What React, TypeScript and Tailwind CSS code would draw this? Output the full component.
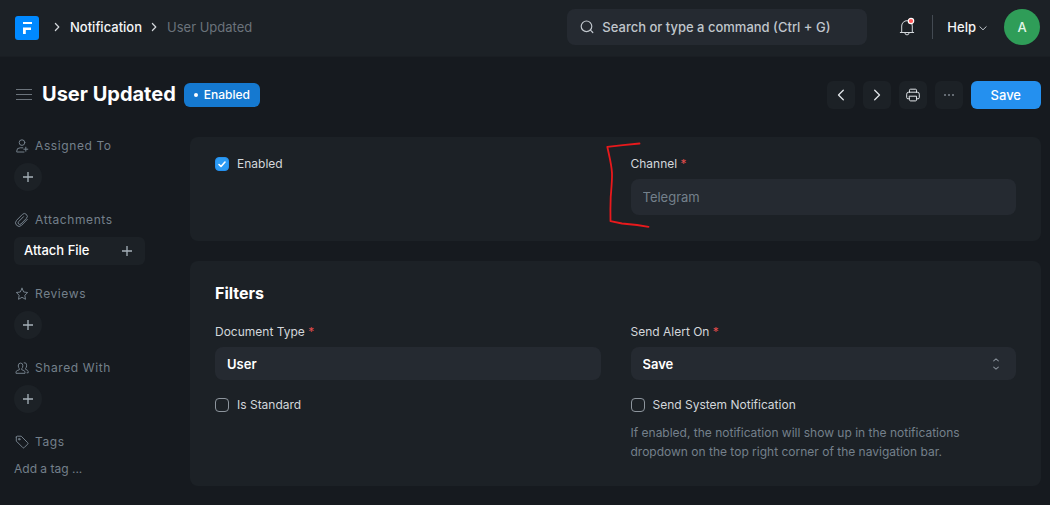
import type { ReactNode, SVGProps } from 'react';

function Icon({ children, className = '', ...rest }: SVGProps<SVGSVGElement>) {
  return (
    <svg
      viewBox="0 0 16 16"
      fill="none"
      stroke="currentColor"
      strokeLinecap="round"
      strokeLinejoin="round"
      aria-hidden="true"
      className={`size-4 shrink-0 ${className}`}
      {...rest}
    >
      {children}
    </svg>
  );
}

const ChevronRight = ({ className = '' }: { className?: string }) => (
  <Icon className={className}>
    <path d="M6.4 4.5 9.8 8l-3.4 3.5" strokeWidth="1.2" />
  </Icon>
);

const UserPlusIcon = () => (
  <Icon>
    <circle cx="8" cy="4.6" r="2.800" />
    <path d="M8.800 9.800H6.200a3.400 3.400 0 0 0-3.500 3.500v.7h7.300M11.800 9.200v4M9.800 11.200h4" />
  </Icon>
);

const ClipIcon = () => (
  <Icon>
    <path d="m13.300 7.400-5.700 5.900a3.500 3.500 0 0 1-5-5l5.800-5.900a2.800 2.800 0 0 1 4 4l-5.500 5.600a1.600 1.600 0 0 1-2.300-2.300l4.900-5" />
  </Icon>
);

const StarIcon = () => (
  <Icon>
    <path d="m8 2.300 1.700 3.700 4 .5-2.900 2.800.7 4L8 11.300l-3.500 2 .7-4-2.900-2.800 4-.5L8 2.300Z" />
  </Icon>
);

const UsersIcon = () => (
  <Icon>
    <path d="M4.400 6V5.300a2.200 2.200 0 0 1 4.400 0V6c0 1.300-.5 2.200-1.100 2.700v1l2.200.9c.7.300 1.100.9 1.100 1.600v1.100H2v-1.100c0-.7.4-1.300 1.100-1.600l2.300-.9v-1C4.800 8.200 4.400 7.300 4.400 6Z" />
    <path d="M10.200 2.700a2.200 2.200 0 0 1 2.400 2.200v.9c0 1.200-.4 2-1 2.500v1l1.700.9c.6.300.9.8.9 1.500v1.100h-1.200" />
  </Icon>
);

const TagIcon = () => (
  <Icon>
    <path d="M2.300 3.100v4l6.500 6.500a1 1 0 0 0 1.400 0l3.500-3.500a1 1 0 0 0 0-1.400L7.200 2.200h-4a.9.900 0 0 0-.9.900Z" />
    <circle cx="5.200" cy="5.200" r=".8" />
  </Icon>
);

const PlusIcon = () => (
  <Icon>
    <path d="M8 3v10M3 8h10" strokeWidth="1.300" strokeLinecap="butt" />
  </Icon>
);

function Section({ icon, title, children }: { icon: ReactNode; title: string; children: ReactNode }) {
  return (
    <section>
      <h2 className="flex h-5 items-center gap-[5px] tracking-wider">
        {icon}
        {title}
      </h2>
      <div className="mt-[7px]">{children}</div>
    </section>
  );
}

function AddButton({ label }: { label: string }) {
  return (
    <button
      type="button"
      aria-label={label}
      className="flex size-7 items-center justify-center rounded-full bg-[#1c2126] text-[#a6b1b9]"
    >
      <PlusIcon />
    </button>
  );
}

function ToolButton({ label, children }: { label: string; children: ReactNode }) {
  return (
    <button
      type="button"
      aria-label={label}
      className="flex size-7 items-center justify-center rounded-md bg-[#1c2126] text-[#e0e4e8]"
    >
      {children}
    </button>
  );
}

function FieldLabel({ htmlFor, children }: { htmlFor: string; children: ReactNode }) {
  return (
    <label htmlFor={htmlFor} className="mb-[5px] block text-xs leading-5 text-[#d3d7db]">
      {children} <span className="text-[#e24c4c]">*</span>
    </label>
  );
}

function Check({ label, checked = false }: { label: string; checked?: boolean }) {
  return (
    <label className="flex h-5 items-center gap-2 text-xs text-[#d3d7db]">
      <span className="grid">
        <input
          type="checkbox"
          defaultChecked={checked}
          className="peer col-start-1 row-start-1 size-3.5 appearance-none rounded border border-[#8d959d] checked:border-[#2490ef] checked:bg-[#2d9bf3]"
        />
        <svg
          viewBox="0 0 14 14"
          fill="none"
          stroke="white"
          strokeWidth="1.600"
          strokeLinecap="round"
          strokeLinejoin="round"
          aria-hidden="true"
          className="pointer-events-none invisible col-start-1 row-start-1 size-3.5 peer-checked:visible"
        >
          <path d="m4 7.500 2 2 4-4.500" />
        </svg>
      </span>
      {label}
    </label>
  );
}

function Navbar() {
  return (
    <header className="flex h-[57px] items-start border-b border-[#1a1e23] bg-[#1c2126] pt-[9px] pr-[10px] pl-[15px] font-medium">
      <nav aria-label="Breadcrumb" className="flex h-9 items-center">
        <a href="#home" aria-label="Home" className="pt-0.5">
          <svg viewBox="0 0 24 24" className="size-6" aria-hidden="true">
            <rect width="24" height="24" rx="3" fill="#0089ff" />
            <path d="M8 6h9v2H8zM8 11.600h8v2.400h-5.200v4H8z" fill="#fff" />
          </svg>
        </a>
        <ChevronRight className="ml-[10px]" />
        <a href="#notification" className="ml-[5px] text-[#f4f5f6]">
          Notification
        </a>
        <ChevronRight className="mx-1" />
        <a href="#user-updated" className="ml-px font-normal text-[#6b737b]">
          User Updated
        </a>
      </nav>
      <div className="ml-auto flex h-9 items-center">
        <label className="flex h-9 w-[300px] items-center rounded-lg bg-[#252a31] px-3 text-[#c0c6cc]">
          <Icon>
            <circle cx="7.500" cy="7.300" r="5.300" strokeWidth="1.200" />
            <path d="m11.500 11.200 2.300 2.300" strokeWidth="1.200" />
          </Icon>
          <input
            type="text"
            aria-label="Search"
            placeholder="Search or type a command (Ctrl + G)"
            className="ml-[7px] min-w-0 flex-1 bg-transparent outline-none placeholder:text-[#c0c6cc]"
          />
        </label>
        <button type="button" aria-label="Notifications" className="ml-[30px] text-[#d3d7db]">
          <svg
            viewBox="0 0 20 20"
            fill="none"
            stroke="currentColor"
            strokeLinecap="round"
            strokeLinejoin="round"
            aria-hidden="true"
            className="size-5"
          >
            <path d="M15.300 15.500V9a5.300 5.300 0 0 0-10.600 0v6.500M3.300 15.500h13.400M7.800 15.700a2.200 2.200 0 0 0 4.400 0" />
            <circle cx="14" cy="4" r="2.700" fill="#ff5858" stroke="#fff" strokeWidth="1.200" />
          </svg>
        </button>
        <div className="ml-[15px] h-6 w-px bg-[#434a52]" />
        <button type="button" className="ml-[14px] flex items-center gap-[3px] text-[#f4f5f6]">
          Help
          <svg
            viewBox="0 0 8 8"
            fill="none"
            stroke="#c0c6cc"
            strokeLinecap="round"
            strokeLinejoin="round"
            aria-hidden="true"
            className="mt-0.5 size-2"
          >
            <path d="M.8 2.700 4 5.800l3.200-3.100" />
          </svg>
        </button>
        <button
          type="button"
          aria-label="Account"
          className="ml-[17px] flex size-9 items-center justify-center rounded-full bg-[#2f9d58] text-[#e4f5e9]"
        >
          A
        </button>
      </div>
    </header>
  );
}

function PageHead() {
  return (
    <div className="flex h-[76px] items-center pr-[9px] pl-4">
      <button type="button" aria-label="Toggle sidebar" className="text-[#6b737b]">
        <Icon>
          <path d="M0 2.500h16M0 7.500h16M0 12.500h16" strokeLinecap="butt" />
        </Icon>
      </button>
      <h1 className="ml-[10px] pb-0.5 text-xl font-bold text-white">User Updated</h1>
      <span className="ml-2 flex h-6 items-center gap-[6px] rounded-md bg-[#1579d0] px-[10px] text-xs font-medium text-white">
        <span className="size-1 rounded-full bg-white" />
        Enabled
      </span>
      <div className="ml-auto flex gap-2">
        <ToolButton label="Previous">
          <Icon>
            <path d="M10.300 3.200 5.500 8l4.800 4.800" strokeWidth="1.300" />
          </Icon>
        </ToolButton>
        <ToolButton label="Next">
          <Icon>
            <path d="M5.700 3.200 10.500 8l-4.800 4.800" strokeWidth="1.300" />
          </Icon>
        </ToolButton>
        <ToolButton label="Print">
          <Icon>
            <path d="M4.500 5.300V3.200a1 1 0 0 1 1-1h5a1 1 0 0 1 1 1v2.100M4.300 11.800H3a1.300 1.300 0 0 1-1.300-1.300V7.200a2 2 0 0 1 2-2h8.600a2 2 0 0 1 2 2v3.300a1.300 1.300 0 0 1-1.300 1.300h-1.300" />
            <path d="M4.500 9.200h7v3.700a1 1 0 0 1-1 1h-5a1 1 0 0 1-1-1z" />
          </Icon>
        </ToolButton>
        <ToolButton label="More">
          <Icon stroke="none" fill="#7c858e">
            <circle cx="4" cy="8" r="1" />
            <circle cx="8" cy="8" r="1" />
            <circle cx="12" cy="8" r="1" />
          </Icon>
        </ToolButton>
        <button type="button" className="h-7 rounded-md bg-[#2490ef] px-5 font-medium text-white">
          Save
        </button>
      </div>
    </div>
  );
}

function Sidebar() {
  return (
    <aside className="flex w-[131px] shrink-0 flex-col gap-[19px] pt-[3px] text-xs text-[#74808b]">
      <Section icon={<UserPlusIcon />} title="Assigned To">
        <AddButton label="Assign" />
      </Section>
      <Section icon={<ClipIcon />} title="Attachments">
        <button
          type="button"
          className="flex h-7 w-full items-center justify-between rounded-md bg-[#1c2126] px-[10px] text-[13px] font-medium text-white"
        >
          Attach File
          <span className="text-[#a6b1b9]">
            <PlusIcon />
          </span>
        </button>
      </Section>
      <Section icon={<StarIcon />} title="Reviews">
        <AddButton label="Add review" />
      </Section>
      <Section icon={<UsersIcon />} title="Shared With">
        <AddButton label="Share" />
      </Section>
      <Section icon={<TagIcon />} title="Tags">
        <button type="button" className="block h-5">
          Add a tag ...
        </button>
      </Section>
    </aside>
  );
}

const control = 'block w-full rounded-lg bg-[#252a31] px-3 outline-none';

export default function App() {
  return (
    <div className="min-h-screen bg-[#161a1f] font-['Inter',sans-serif] text-[13px] leading-5 text-[#d3d7db]">
      <Navbar />
      <PageHead />
      <div className="flex gap-[45px] pr-[9px] pb-[19px] pl-[14px]">
        <Sidebar />
        <main className="flex min-w-0 flex-1 flex-col gap-5 pt-1">
          <section className="grid grid-cols-2 gap-[30px] rounded-lg bg-[#1c2126] px-[25px] pt-[17px] pb-[26px]">
            <Check label="Enabled" checked />
            <div className="relative">
              <FieldLabel htmlFor="channel">Channel</FieldLabel>
              <input
                id="channel"
                readOnly
                defaultValue="Telegram"
                className={`${control} h-9 text-[#74808b]`}
              />
              <svg
                viewBox="0 0 52 96"
                fill="none"
                stroke="#e8191c"
                strokeWidth="1.800"
                strokeLinecap="round"
                strokeLinejoin="round"
                aria-hidden="true"
                className="pointer-events-none absolute -top-4 -left-7 h-24 w-[52px]"
              >
                <path d="M36.500 5.500 20 7.200 4.300 8.800C6 17 8.500 26 9 35c.2 8-.7 16-1.300 24-.3 8-.4 16-.2 24.200L19 85.500l15 1.500 11.500 1.800" />
              </svg>
            </div>
          </section>
          <section className="rounded-lg bg-[#1c2126] px-[25px] pt-5 pb-[25px]">
            <h2 className="text-base font-bold text-white">Filters</h2>
            <div className="mt-[17px] grid grid-cols-2 gap-[30px]">
              <div>
                <FieldLabel htmlFor="doctype">Document Type</FieldLabel>
                <input
                  id="doctype"
                  defaultValue="User"
                  className={`${control} mb-[15px] h-[33px] font-semibold text-white`}
                />
                <Check label="Is Standard" />
              </div>
              <div>
                <FieldLabel htmlFor="alert">Send Alert On</FieldLabel>
                <div className="mb-[15px] grid items-center">
                  <select
                    id="alert"
                    className={`${control} col-start-1 row-start-1 h-[33px] appearance-none font-semibold text-white`}
                  >
                    <option>Save</option>
                  </select>
                  <Icon className="pointer-events-none col-start-1 row-start-1 mr-3 justify-self-end text-[#858d96]">
                    <path d="M5.700 4.800 8 2.800l2.300 2M5.700 11.200 8 13.200l2.300-2" strokeWidth="1.100" />
                  </Icon>
                </div>
                <Check label="Send System Notification" />
                <p className="mt-2 max-w-[350px] text-xs leading-[19px] text-[#74808b]">
                  If enabled, the notification will show up in the notifications dropdown on the top right corner of the
                  navigation bar.
                </p>
              </div>
            </div>
          </section>
        </main>
      </div>
    </div>
  );
}
